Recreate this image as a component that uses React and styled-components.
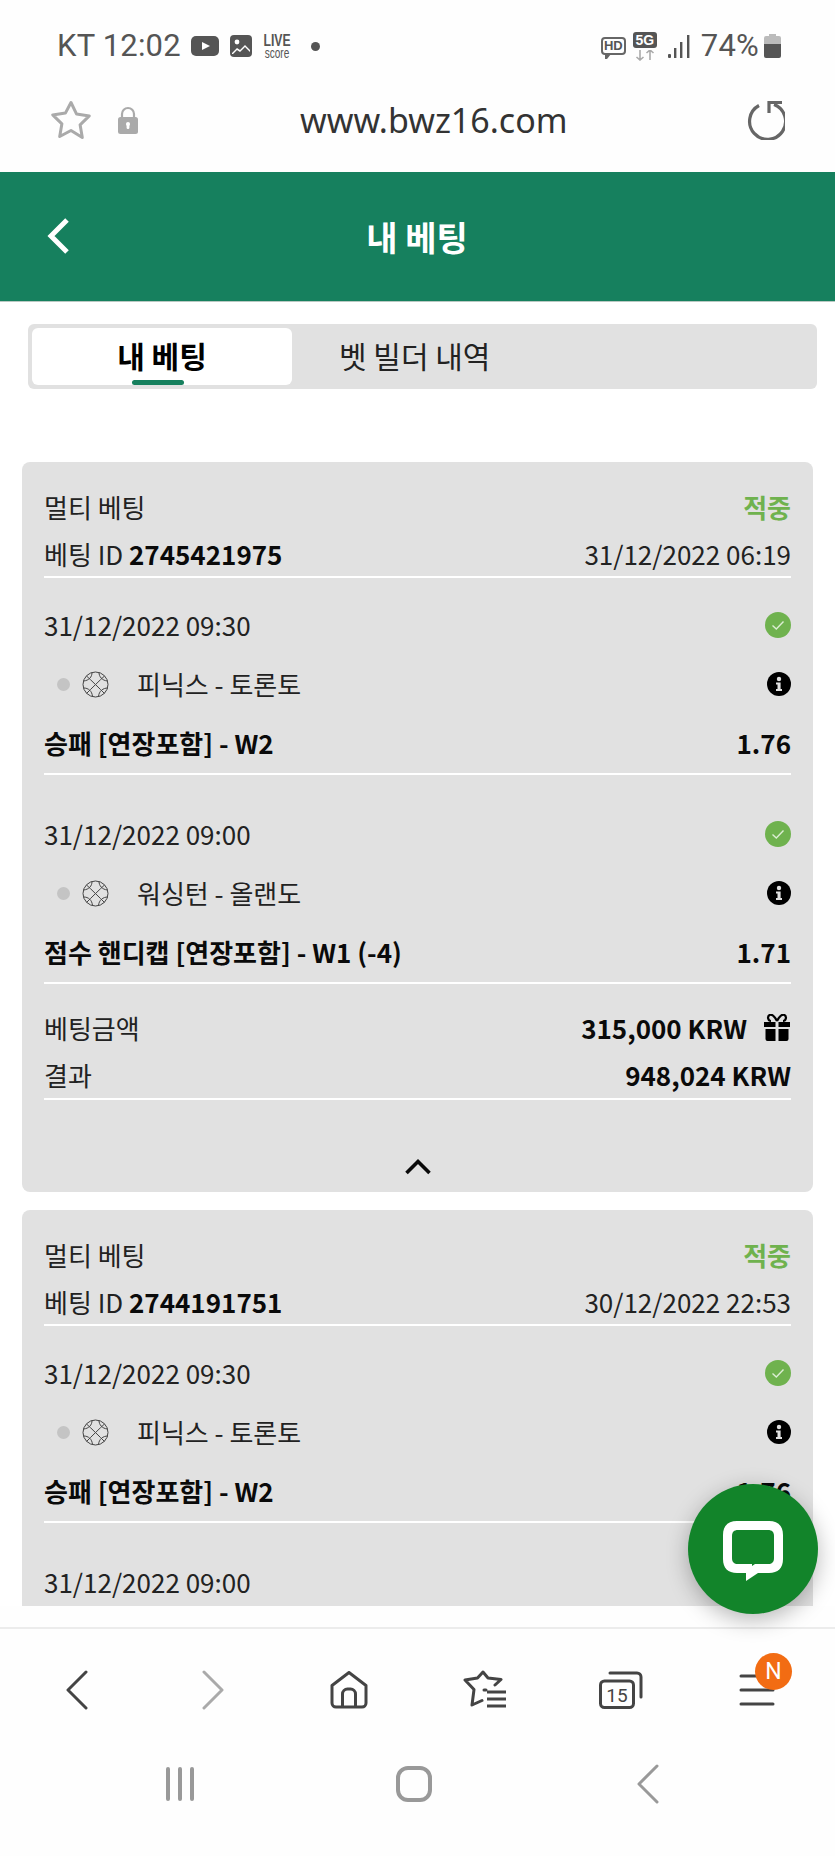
import React from 'react';
import styled, { createGlobalStyle } from 'styled-components';

const GlobalStyle = createGlobalStyle`
  html, body {
    margin: 0;
    padding: 0;
    background: #fff;
  }
  * {
    box-sizing: border-box;
  }
`;

const Phone = styled.div`
  position: relative;
  width: 835px;
  height: 1856px;
  display: flex;
  flex-direction: column;
  overflow: hidden;
  background: #fefefe;
  font-family: "Noto Sans CJK KR", "Noto Sans", sans-serif;
  color: #111;
`;

const StatusBar = styled.div`
  height: 92px;
  flex: none;
  display: flex;
  align-items: center;
  justify-content: space-between;
  padding: 0 54px 0 57px;
  color: #555;
  font-family: Roboto, sans-serif;
`;

const StatusGroup = styled.div`
  display: flex;
  align-items: center;
`;

const StatusText = styled.span`
  font-size: 31px;
  line-height: 40px;
  letter-spacing: 0.2px;
`;

const LiveScore = styled.div`
  margin-left: 11px;
  width: 28px;
  display: flex;
  flex-direction: column;
  align-items: center;
  color: #555;
  font-family: "Liberation Sans", sans-serif;
  transform: scaleX(0.72);
`;

const LiveTop = styled.span`
  font-size: 17px;
  line-height: 15px;
  font-weight: 700;
`;

const LiveBottom = styled.span`
  font-size: 14px;
  line-height: 11px;
`;

const Dot = styled.span`
  width: 9px;
  height: 9px;
  margin-left: 20px;
  border-radius: 50%;
  background: #555;
`;

const HdBadge = styled.div`
  position: relative;
  width: 25px;
  height: 18px;
  margin-right: 7px;
  border: 2px solid #666;
  border-radius: 4px;
  color: #555;
  font: 700 13px/14px "Liberation Sans", sans-serif;
  text-align: center;
  &::after {
    content: "";
    position: absolute;
    left: 2px;
    bottom: -6px;
    width: 0;
    height: 0;
    border-left: 2px solid #666;
    border-right: 4px solid transparent;
    border-top: 5px solid #666;
  }
`;

const FiveG = styled.div`
  width: 24px;
  margin-right: 11px;
  display: flex;
  flex-direction: column;
  align-items: center;
`;

const FiveGLabel = styled.span`
  width: 24px;
  height: 16px;
  border-radius: 3px;
  background: #555;
  color: #fff;
  font: 700 14px/16px "Liberation Sans", sans-serif;
  text-align: center;
`;

const UrlBar = styled.div`
  height: 80px;
  flex: none;
  margin-top: -12px;
  display: grid;
  grid-template-columns: 250px 1fr auto;
  align-items: center;
  padding: 0 50px;
`;

const UrlIcons = styled.div`
  display: flex;
  align-items: center;
  gap: 26px;
`;

const UrlText = styled.div`
  font-family: "Noto Sans", sans-serif;
  font-size: 34px;
  line-height: 44px;
  color: #333;
`;

const Header = styled.header`
  height: 130px;
  flex: none;
  margin-top: 12px;
  display: grid;
  grid-template-columns: 1fr;
  align-items: center;
  justify-items: center;
  padding-right: 1px;
  position: relative;
  background: #16805e;
  border-bottom: 1px solid #b9c9c2;
  color: #fff;
  font-size: 34px;
  font-weight: 700;
`;

const HeaderBack = styled.svg`
  position: absolute;
  left: 47px;
  top: 46px;
`;

const Content = styled.main`
  flex: 1;
  min-height: 0;
  overflow: hidden;
  background: #fff;
  padding: 22px 22px 0;
`;

const Tabs = styled.div`
  margin: 0 -4px 0 6px;
  height: 65px;
  padding: 4px;
  display: grid;
  grid-template-columns: 260px 1fr;
  border-radius: 6px;
  background: #e1e1e1;
`;

const Tab = styled.div`
  position: relative;
  display: flex;
  align-items: center;
  justify-content: ${(p) => (p.$active ? 'center' : 'flex-start')};
  padding-left: ${(p) => (p.$active ? '0' : '47px')};
  padding-bottom: 4px;
  border-radius: 6px;
  background: ${(p) => (p.$active ? '#fff' : 'transparent')};
  color: ${(p) => (p.$active ? '#000' : '#222')};
  font-size: 30px;
  font-weight: ${(p) => (p.$active ? 700 : 400)};
  ${(p) =>
    p.$active &&
    `&::after {
      content: "";
      position: absolute;
      left: 100px;
      bottom: 0;
      width: 52px;
      height: 5px;
      border-radius: 3px;
      background: #16805e;
    }`}
`;

const Card = styled.section`
  margin-top: ${(p) => (p.$first ? '73px' : '18px')};
  padding: 21px 22px 0;
  border-radius: 8px;
  background: #e1e1e1;
`;

const Row = styled.div`
  height: ${(p) => p.$h || 48}px;
  display: flex;
  align-items: center;
  justify-content: space-between;
  font-size: 26px;
  line-height: 36px;
  font-weight: ${(p) => (p.$bold ? 700 : 400)};
  color: ${(p) => (p.$bold ? '#0a0a0a' : '#222')};
`;

const StatusWord = styled.span`
  color: #6fb24e;
  font-weight: 700;
`;

const Strong = styled.strong`
  font-weight: 700;
  color: #0a0a0a;
`;

const IdRow = styled(Row)`
  height: 47px;
  border-bottom: 2px solid #fff;
`;

const Selection = styled.div`
  margin-top: ${(p) => (p.$first ? '0' : '12px')};
  padding: 23px 0 6px;
  border-bottom: 2px solid #fff;
  display: flex;
  flex-direction: column;
  gap: 11px;
`;

const Match = styled.div`
  display: flex;
  align-items: center;
  min-width: 0;
`;

const LiveDot = styled.span`
  width: 13px;
  height: 13px;
  margin: 0 12px 0 13px;
  border-radius: 50%;
  background: #c4c4c4;
`;

const TeamNames = styled.span`
  margin-left: 28px;
  color: #222;
`;

const Summary = styled.div`
  padding-top: 20px;
  border-bottom: 2px solid #fff;
`;

const AmountCell = styled.div`
  display: flex;
  align-items: center;
  gap: 16px;
`;

const Collapse = styled.div`
  height: 92px;
  display: flex;
  align-items: flex-end;
  justify-content: center;
  padding-bottom: 16px;
`;

const Fab = styled.button`
  position: absolute;
  left: 688px;
  top: 1484px;
  width: 130px;
  height: 130px;
  padding: 0;
  display: flex;
  align-items: center;
  justify-content: center;
  border: 0;
  border-radius: 50%;
  background: #12842a;
  box-shadow: 0 6px 22px rgba(0, 0, 0, 0.28);
`;

const BottomBar = styled.nav`
  height: 229px;
  flex: none;
  margin-top: 21px;
  border-top: 2px solid #ececec;
  display: flex;
  flex-direction: column;
  background: #fefefe;
`;

const BrowserButtons = styled.div`
  height: 104px;
  padding: 18px 9px 0;
  display: grid;
  grid-template-columns: repeat(6, 136px);
  justify-items: center;
  align-items: center;
`;

const MenuButton = styled.div`
  position: relative;
  width: 36px;
  height: 40px;
  display: flex;
  align-items: center;
  justify-content: center;
`;

const Badge = styled.span`
  position: absolute;
  left: 16px;
  top: -17px;
  width: 37px;
  height: 37px;
  border-radius: 50%;
  background: #f26c13;
  color: #fff;
  font: 400 23px/37px Roboto, sans-serif;
  text-align: center;
`;

const SystemButtons = styled.div`
  height: 90px;
  margin-top: 6px;
  padding: 0 63px;
  display: grid;
  grid-template-columns: repeat(3, 234px);
  justify-items: center;
  align-items: center;
`;

const Youtube = () => (
  <svg width="28" height="20" viewBox="0 0 28 20" style={{ marginLeft: 10 }}>
    <rect width="28" height="20" rx="5" fill="#555" />
    <path d="M11 6l8 4-8 4z" fill="#fff" />
  </svg>
);

const Picture = () => (
  <svg width="22" height="22" viewBox="0 0 22 22" style={{ marginLeft: 11 }}>
    <rect width="22" height="22" rx="4" fill="#555" />
    <rect x="2" y="2" width="18" height="18" rx="2" fill="#fff" opacity="0" />
    <circle cx="7" cy="7" r="2.4" fill="#fff" />
    <path d="M2 18l5-5 3 2 5-5 5 5v4H2z" fill="#fff" />
    <path d="M2 20l5-5 3 2 5-5 5 5v3H2z" fill="#555" />
  </svg>
);

const Arrows = () => (
  <svg width="20" height="11" viewBox="0 0 20 11" style={{ marginTop: 2 }}>
    <path d="M5 0v10M1.5 7L5 10l3.5-3M15 10V0M11.5 3L15 0l3.5 3" fill="none" stroke="#aaa" strokeWidth="1.6" />
  </svg>
);

const Signal = () => (
  <svg width="22" height="23" viewBox="0 0 22 23">
    <g fill="#555">
      <rect x="0" y="19" width="3" height="4" rx="1" />
      <rect x="6" y="13" width="2.4" height="10" />
      <rect x="12" y="7" width="2.4" height="16" />
      <rect x="19" y="0" width="2.4" height="23" />
    </g>
  </svg>
);

const Battery = () => (
  <svg width="17" height="24" viewBox="0 0 17 24" style={{ marginLeft: 5 }}>
    <path d="M5 0h7v2h3a2 2 0 0 1 2 2v6H0V4a2 2 0 0 1 2-2h3z" fill="#bbb" />
    <path d="M0 10h17v12a2 2 0 0 1-2 2H2a2 2 0 0 1-2-2z" fill="#555" />
  </svg>
);

const StarOutline = () => (
  <svg width="42" height="41" viewBox="0 0 42 41">
    <path
      d="M21 2.5l5.6 11.6 12.7 1.8-9.2 8.9 2.2 12.7L21 30.5 9.7 36.5l2.2-12.7-9.2-8.9 12.7-1.8z"
      fill="none"
      stroke="#aaa"
      strokeWidth="3"
      strokeLinejoin="round"
    />
  </svg>
);

const Lock = () => (
  <svg width="20" height="28" viewBox="0 0 20 28">
    <path d="M4 12V8a6 6 0 0 1 12 0v4" fill="none" stroke="#aaa" strokeWidth="2.2" />
    <rect y="11" width="20" height="17" rx="2.5" fill="#aaa" />
    <rect x="8.6" y="17" width="2.8" height="6" rx="1.2" fill="#fff" />
    <circle cx="10" cy="18" r="2" fill="#fff" />
  </svg>
);

const Reload = () => (
  <svg width="40" height="40" viewBox="0 0 40 40">
    <path
      d="M14 5.5A18 18 0 1 0 29 4.5M24 13V2.5h13"
      fill="none"
      stroke="#666"
      strokeWidth="3.2"
    />
  </svg>
);

const CheckCircle = () => (
  <svg width="26" height="26" viewBox="0 0 26 26">
    <circle cx="13" cy="13" r="13" fill="#6fb24e" />
    <path d="M7.5 13.5l3.8 3.6 7.2-7.6" fill="none" stroke="#dcedd3" strokeWidth="1.4" />
  </svg>
);

const InfoCircle = () => (
  <svg width="24" height="24" viewBox="0 0 24 24">
    <circle cx="12" cy="12" r="12" fill="#000" />
    <circle cx="12" cy="7" r="2.2" fill="#e1e1e1" />
    <path d="M9 10.5h4.6V17H15v2H9v-2h1.5v-4.5H9z" fill="#e1e1e1" />
  </svg>
);

const Basketball = () => (
  <svg width="27" height="27" viewBox="0 0 27 27" fill="none" stroke="#444" strokeWidth="1">
    <circle cx="13.5" cy="13.5" r="12.5" />
    <path d="M4.5 5C9 9 18 18 22.5 22.5M22.5 5C18 9 9 18 4.5 22.5" />
    <path d="M10 1.5C10 6 7 9.5 1.5 10M26 17c-5 0-9 3-9.5 8.5M17 1.5c0 4 3 8 8.5 8.5M1.5 17c5 0 8.5 3 9 8.5" />
  </svg>
);

const Gift = () => (
  <svg width="28" height="28" viewBox="0 0 28 28" fill="#000">
    <path d="M1 8h11.5v5H1zM15.5 8H27v5H15.5zM2.5 15h10v12h-8a2 2 0 0 1-2-2zM15.5 15h10v10a2 2 0 0 1-2 2h-8z" />
    <path d="M14 7C11 1 8 0 6.5 1 4 2.5 5 7 8 7M14 7c3-6 6-7 7.500-6C24 2.500 23 7 20 7" fill="none" stroke="#000" strokeWidth="2.2" />
  </svg>
);

const ChevronUp = () => (
  <svg width="28" height="18" viewBox="0 0 28 18">
    <path d="M2.500 15L14 3.500 25.500 15" fill="none" stroke="#0a0a0a" strokeWidth="3.6" />
  </svg>
);

const ChatBubble = () => (
  <svg width="60" height="60" viewBox="0 0 60 60" style={{ marginTop: 3 }}>
    <path
      d="M14 0h32c9 0 14 5 14 14v24c0 9-5 14-14 14H35L23 60V52h-9C5 52 0 47 0 38V14C0 5 5 0 14 0z"
      fill="#fff"
    />
    <path
      d="M15 9h30c4 0 6 2 6 6v22c0 4-2 6-6 6H32l-3 2v-2H15c-4 0-6-2-6-6V15c0-4 2-6 6-6z"
      fill="#12842a"
    />
  </svg>
);

const Chevron = ({ color, dir }) => (
  <svg width="22" height="40" viewBox="0 0 22 40">
    <path
      d={dir === 'left' ? 'M20 2L2 20l18 18' : 'M2 2l18 18L2 38'}
      fill="none"
      stroke={color}
      strokeWidth="3"
      strokeLinecap="round"
      strokeLinejoin="round"
    />
  </svg>
);

const HomeIcon = () => (
  <svg width="38" height="38" viewBox="0 0 38 38" fill="none" stroke="#444" strokeWidth="3" strokeLinejoin="round">
    <path d="M19 1.500L2 14.500V32a4 4 0 0 0 4 4h26a4 4 0 0 0 4-4V14.500z" />
    <path d="M12.500 36V23a5 5 0 0 1 5-5h3a5 5 0 0 1 5 5v13" />
  </svg>
);

const StarList = () => (
  <svg width="44" height="40" viewBox="0 0 44 40" fill="none" stroke="#444" strokeWidth="3">
    <path
      d="M23 20h-2M32 15l6-5.500-13-1.500L20 2l-5.500 6-12.500 2 9 9.500L9 35l10-4.500"
      strokeLinejoin="round"
      strokeLinecap="round"
    />
    <path d="M24 22h19M24 29h19M24 36h19" />
  </svg>
);

const TabsIcon = () => (
  <svg width="44" height="38" viewBox="0 0 44 38">
    <path d="M11 2h27a4 4 0 0 1 4 4v20" fill="none" stroke="#444" strokeWidth="3" strokeLinecap="round" />
    <rect x="1.500" y="10" width="33" height="26.500" rx="4" fill="none" stroke="#444" strokeWidth="3" />
    <text x="18" y="31" textAnchor="middle" fontFamily="Roboto, sans-serif" fontSize="19" fill="#444">15</text>
  </svg>
);

const MenuIcon = () => (
  <svg width="36" height="34" viewBox="0 0 36 34" fill="none" stroke="#444" strokeWidth="3" strokeLinecap="round">
    <path d="M2 3h32M2 17h32M2 31h32" />
  </svg>
);

const RecentsIcon = () => (
  <svg width="30" height="34" viewBox="0 0 30 34" fill="none" stroke="#999" strokeWidth="4" strokeLinecap="round">
    <path d="M3 2v30M15 2v30M27 2v30" />
  </svg>
);

const HomeSquare = () => (
  <svg width="36" height="36" viewBox="0 0 36 36">
    <rect x="2" y="2" width="32" height="32" rx="10" fill="none" stroke="#999" strokeWidth="4" />
  </svg>
);

const BET_CARDS = [
  {
    id: '2745421975',
    placed: '31/12/2022 06:19',
    picks: [
      { date: '31/12/2022 09:30', teams: '피닉스 - 토론토', market: '승패 [연장포함] - W2', odds: '1.76' },
      { date: '31/12/2022 09:00', teams: '워싱턴 - 올랜도', market: '점수 핸디캡 [연장포함] - W1 (-4)', odds: '1.71' },
    ],
    stake: '315,000 KRW',
    result: '948,024 KRW',
  },
  {
    id: '2744191751',
    placed: '30/12/2022 22:53',
    picks: [
      { date: '31/12/2022 09:30', teams: '피닉스 - 토론토', market: '승패 [연장포함] - W2', odds: '1.76' },
      { date: '31/12/2022 09:00', teams: '워싱턴 - 올랜도', market: '점수 핸디캡 [연장포함] - W1 (-4)', odds: '1.71' },
    ],
    stake: '315,000 KRW',
    result: '948,024 KRW',
  },
];

function BetCard({ bet, first }) {
  return (
    <Card $first={first}>
      <Row>
        <span>멀티 베팅</span>
        <StatusWord>적중</StatusWord>
      </Row>
      <IdRow>
        <span>베팅 ID <Strong>{bet.id}</Strong></span>
        <span>{bet.placed}</span>
      </IdRow>
      {bet.picks.map((pick, i) => (
        <Selection key={pick.date} $first={i === 0}>
          <Row>
            <span>{pick.date}</span>
            <CheckCircle />
          </Row>
          <Row>
            <Match>
              <LiveDot />
              <Basketball />
              <TeamNames>{pick.teams}</TeamNames>
            </Match>
            <InfoCircle />
          </Row>
          <Row $bold>
            <span>{pick.market}</span>
            <span>{pick.odds}</span>
          </Row>
        </Selection>
      ))}
      <Summary>
        <Row $h={47}>
          <span>베팅금액</span>
          <AmountCell>
            <Strong>{bet.stake}</Strong>
            <Gift />
          </AmountCell>
        </Row>
        <Row $h={47}>
          <span>결과</span>
          <Strong>{bet.result}</Strong>
        </Row>
      </Summary>
      <Collapse>
        <ChevronUp />
      </Collapse>
    </Card>
  );
}

export default function App() {
  return (
    <>
      <GlobalStyle />
      <Phone>
        <StatusBar>
          <StatusGroup>
            <StatusText>KT 12:02</StatusText>
            <Youtube />
            <Picture />
            <LiveScore>
              <LiveTop>LIVE</LiveTop>
              <LiveBottom>score</LiveBottom>
            </LiveScore>
            <Dot />
          </StatusGroup>
          <StatusGroup>
            <HdBadge>HD</HdBadge>
            <FiveG>
              <FiveGLabel>5G</FiveGLabel>
              <Arrows />
            </FiveG>
            <Signal />
            <StatusText style={{ marginLeft: 11 }}>74%</StatusText>
            <Battery />
          </StatusGroup>
        </StatusBar>
        <UrlBar>
          <UrlIcons>
            <StarOutline />
            <Lock />
          </UrlIcons>
          <UrlText>www.bwz16.com</UrlText>
          <Reload />
        </UrlBar>
        <Header>
          <HeaderBack width="22" height="36" viewBox="0 0 22 36">
            <path d="M20 2L4 18l16 16" fill="none" stroke="#fff" strokeWidth="5" />
          </HeaderBack>
          <span>내 베팅</span>
        </Header>
        <Content>
          <Tabs>
            <Tab $active>내 베팅</Tab>
            <Tab>벳 빌더 내역</Tab>
          </Tabs>
          {BET_CARDS.map((bet, i) => (
            <BetCard key={bet.id} bet={bet} first={i === 0} />
          ))}
        </Content>
        <BottomBar>
          <BrowserButtons>
            <Chevron dir="left" color="#444" />
            <Chevron dir="right" color="#aaa" />
            <HomeIcon />
            <StarList />
            <TabsIcon />
            <MenuButton>
              <MenuIcon />
              <Badge>N</Badge>
            </MenuButton>
          </BrowserButtons>
          <SystemButtons>
            <RecentsIcon />
            <HomeSquare />
            <Chevron dir="left" color="#999" />
          </SystemButtons>
        </BottomBar>
        <Fab>
          <ChatBubble />
        </Fab>
      </Phone>
    </>
  );
}
